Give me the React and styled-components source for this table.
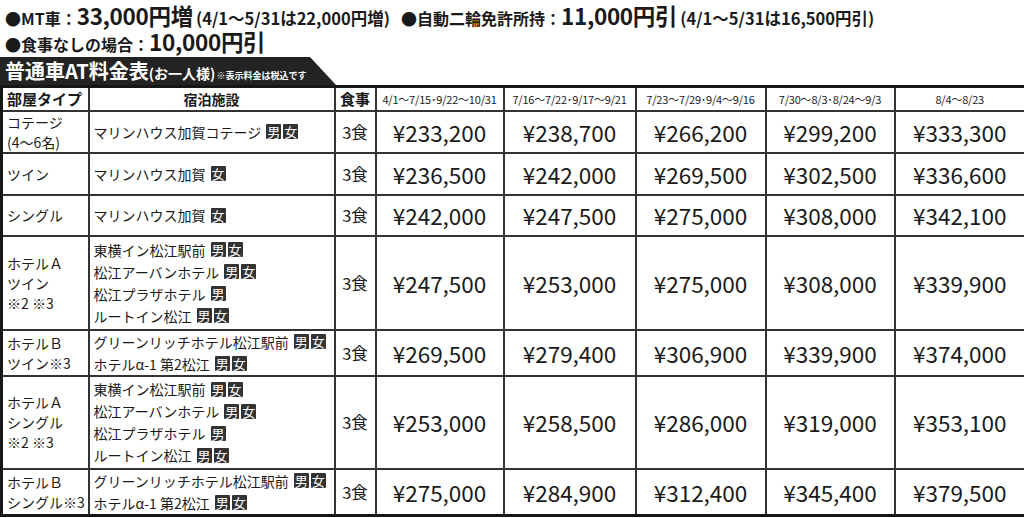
import React from 'react'
import styled, { createGlobalStyle } from 'styled-components'

const GlobalStyle = createGlobalStyle`
  html, body {
    margin: 0;
    padding: 0;
    background: #fff;
  }
  body {
    font-family: "Noto Sans CJK JP", "Noto Sans", sans-serif;
    color: #1a1a1a;
  }
`

const Page = styled.div`
  width: 1024px;
  height: 518px;
  overflow: hidden;
  display: flex;
  flex-direction: column;
`

const Notes = styled.div`
  display: flex;
  flex-direction: column;
  padding: 2px 0 0 5px;
`

const NoteLine = styled.div`
  display: flex;
  align-items: center;
  gap: 11px;
  height: ${p => p.$h}px;
  font-weight: 700;
  white-space: nowrap;
`

const Group = styled.span`
  display: inline-flex;
  align-items: baseline;
  line-height: 1;
`

const Label = styled.span`
  font-size: 16px;
`

const Big = styled.span`
  font-size: 22.5px;
  letter-spacing: -0.3px;
`

const Aside = styled.span`
  font-size: 16.5px;
  margin-left: 3px;
`

const Tab = styled.div`
  margin-top: 4px;
  width: 336px;
  height: 28px;
  background: #232323;
  clip-path: polygon(0 0, 310px 0, 336px 100%, 0 100%);
  color: #fff;
  display: flex;
  align-items: baseline;
  padding: 0 0 0 5px;
  box-sizing: border-box;
  font-weight: 700;
  line-height: 28px;
  white-space: nowrap;
`

const TabTitle = styled.span`
  font-size: 20px;
`

const TabSub = styled.span`
  font-size: 14px;
`

const TabNote = styled.span`
  font-size: 9px;
  margin-left: 1px;
`

const Table = styled.table`
  width: 1024px;
  border-collapse: collapse;
  table-layout: fixed;
  border: 3px solid #161616;
`

const Row = styled.tr`
  height: ${p => p.$h}px;
`

const Head = styled.th`
  border: 2px solid #333;
  padding: 0 ${p => (p.$left ? '4px' : '0')};
  font-size: ${p => p.$size || 15}px;
  font-weight: ${p => (p.$light ? 400 : 700)};
  text-align: ${p => (p.$left ? 'left' : 'center')};
  white-space: nowrap;
  letter-spacing: ${p => (p.$light ? '-0.2px' : '0')};
  overflow: hidden;
`

const Cell = styled.td`
  border: 2px solid #333;
  padding: 0;
  vertical-align: middle;
`

const TypeCell = styled(Cell)`
  padding-left: 4px;
  font-size: 14px;
  line-height: 20px;
  white-space: nowrap;
`

const HotelCell = styled(Cell)`
  padding-left: 4px;
  font-size: 14px;
  line-height: 22px;
  white-space: nowrap;
`

const MealCell = styled(Cell)`
  text-align: center;
  font-size: 16.5px;
`

const PriceCell = styled(Cell)`
  text-align: center;
  font-size: 22.5px;
`

const HotelLine = styled.div`
  display: flex;
  align-items: center;
  height: 22px;
`

const Badges = styled.span`
  display: inline-flex;
  gap: 2px;
  margin-left: 5px;
`

const Badge = styled.span`
  display: inline-flex;
  align-items: center;
  justify-content: center;
  width: 15px;
  height: 15px;
  background: #333;
  color: #fff;
  font-size: 13px;
  line-height: 1;
  border-radius: 1px;
`

const periods = [
  '4/1〜7/15･9/22〜10/31',
  '7/16〜7/22･9/17〜9/21',
  '7/23〜7/29･9/4〜9/16',
  '7/30〜8/3･8/24〜9/3',
  '8/4〜8/23',
]

const hotelA = [
  ['東横イン松江駅前', ['男', '女']],
  ['松江アーバンホテル', ['男', '女']],
  ['松江プラザホテル', ['男']],
  ['ルートイン松江', ['男', '女']],
]

const hotelB = [
  ['グリーンリッチホテル松江駅前', ['男', '女']],
  ['ホテルα-1 第2松江', ['男', '女']],
]

const rows = [
  { h: 41, type: ['コテージ', '(4〜6名)'], hotels: [['マリンハウス加賀コテージ', ['男', '女']]], prices: ['233,200', '238,700', '266,200', '299,200', '333,300'] },
  { h: 42, type: ['ツイン'], hotels: [['マリンハウス加賀', ['女']]], prices: ['236,500', '242,000', '269,500', '302,500', '336,600'] },
  { h: 41, type: ['シングル'], hotels: [['マリンハウス加賀', ['女']]], prices: ['242,000', '247,500', '275,000', '308,000', '342,100'] },
  { h: 94, type: ['ホテルＡ', 'ツイン', '※2 ※3'], hotels: hotelA, prices: ['247,500', '253,000', '275,000', '308,000', '339,900'] },
  { h: 46, type: ['ホテルＢ', 'ツイン※3'], hotels: hotelB, prices: ['269,500', '279,400', '306,900', '339,900', '374,000'] },
  { h: 93, type: ['ホテルＡ', 'シングル', '※2 ※3'], hotels: hotelA, prices: ['253,000', '258,500', '286,000', '319,000', '353,100'] },
  { h: 46, type: ['ホテルＢ', 'シングル※3'], hotels: hotelB, prices: ['275,000', '284,900', '312,400', '345,400', '379,500'] },
]

const colWidths = [87, 246, 41, 128, 132, 130, 129, 131]

const App = () => {
  return (
    <Page>
      <GlobalStyle />
      <Notes>
        <NoteLine $h={27}>
          <Group>
            <Label>●MT車：</Label>
            <Big>33,000円増</Big>
            <Aside>(4/1〜5/31は22,000円増)</Aside>
          </Group>
          <Group>
            <Label>●自動二輪免許所持：</Label>
            <Big>11,000円引</Big>
            <Aside>(4/1〜5/31は16,500円引)</Aside>
          </Group>
        </NoteLine>
        <NoteLine $h={24}>
          <Group>
            <Label>●食事なしの場合：</Label>
            <Big>10,000円引</Big>
          </Group>
        </NoteLine>
      </Notes>

      <Tab>
        <TabTitle>普通車AT料金表</TabTitle>
        <TabSub>(お一人様)</TabSub>
        <TabNote>※表示料金は税込です</TabNote>
      </Tab>

      <Table>
        <colgroup>
          {colWidths.map((w, i) => (
            <col key={i} style={{ width: w }} />
          ))}
        </colgroup>
        <thead>
          <Row $h={24}>
            <Head $left>部屋タイプ</Head>
            <Head $size={14}>宿泊施設</Head>
            <Head>食事</Head>
            {periods.map(p => (
              <Head key={p} $light $size={11}>{p}</Head>
            ))}
          </Row>
        </thead>
        <tbody>
          {rows.map((r, i) => (
            <Row key={i} $h={r.h}>
              <TypeCell>
                {r.type.map(t => (
                  <div key={t}>{t}</div>
                ))}
              </TypeCell>
              <HotelCell>
                {r.hotels.map(([name, tags]) => (
                  <HotelLine key={name}>
                    {name}
                    <Badges>
                      {tags.map(t => (
                        <Badge key={t}>{t}</Badge>
                      ))}
                    </Badges>
                  </HotelLine>
                ))}
              </HotelCell>
              <MealCell>3食</MealCell>
              {r.prices.map((p, j) => (
                <PriceCell key={j}>¥{p}</PriceCell>
              ))}
            </Row>
          ))}
        </tbody>
      </Table>
    </Page>
  )
}

export default App
